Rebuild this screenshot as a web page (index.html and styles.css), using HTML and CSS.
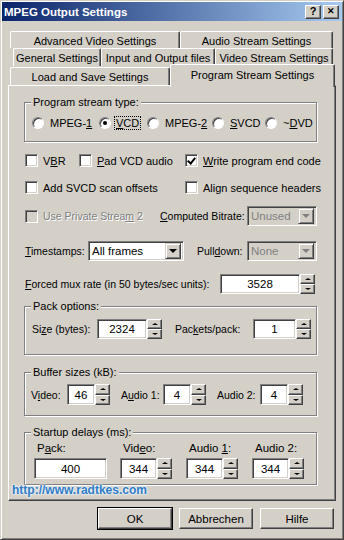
FILE: index.html
```html
<!DOCTYPE html>
<html lang="en">
<head>
  <meta charset="UTF-8">
  <meta name="viewport" content="width=device-width, initial-scale=1.0">
  <title>MPEG Output Settings</title>
  <link rel="stylesheet" href="styles.css">
</head>
<body>

  <div class="window">
    <div class="titlebar">
      <span class="title">MPEG Output Settings</span>
      <div class="caption-buttons">
        <span class="cap-btn">?</span>
        <span class="cap-btn cap-close">&#x2715;</span>
      </div>
    </div>

    <!-- tab strip, three rows -->
    <div class="tabs">
      <div class="tab-row row-1">
        <div class="tab" style="width: 170px">Advanced Video Settings</div>
        <div class="tab" style="width: 153px">Audio Stream Settings</div>
      </div>
      <div class="tab-row row-2">
        <div class="tab" style="width: 88px">General Settings</div>
        <div class="tab" style="width: 114px">Input and Output files</div>
        <div class="tab" style="width: 118px">Video Stream Settings</div>
      </div>
      <div class="tab-row row-3">
        <div class="tab" style="width: 160px">Load and Save Settings</div>
        <div class="tab tab-active" style="width: 165px">Program Stream Settings</div>
      </div>
    </div>

    <div class="panel">
      <div class="group group-type">
        <span class="group-title">Program stream type:</span>
        <div class="radio-row">
          <label class="radio-item"><span class="radio"></span><span>MPEG-<u>1</u></span></label>
          <label class="radio-item"><span class="radio checked"></span><span class="focus"><u>V</u>CD</span></label>
          <label class="radio-item"><span class="radio"></span><span>MPEG-<u>2</u></span></label>
          <label class="radio-item"><span class="radio"></span><span><u>S</u>VCD</span></label>
          <label class="radio-item"><span class="radio"></span><span>~<u>D</u>VD</span></label>
        </div>
      </div>

      <div class="row row-check">
        <label class="check-item" style="width: 54px"><span class="check"></span><span>V<u>B</u>R</span></label>
        <label class="check-item" style="width: 106px"><span class="check"></span><span><u>P</u>ad VCD audio</span></label>
        <label class="check-item"><span class="check checked"></span><span><u>W</u>rite program end code</span></label>
      </div>

      <div class="row row-check2">
        <label class="check-item" style="width: 160px"><span class="check"></span><span>Add SVCD scan offsets</span></label>
        <label class="check-item"><span class="check"></span><span>Align sequence headers</span></label>
      </div>

      <div class="row row-field">
        <label class="check-item disabled" style="width: 135px"><span class="check"></span><span>Use Private Strea<u>m</u> 2</span></label>
        <span class="label" style="width: 87px"><u>C</u>omputed Bitrate:</span>
        <div class="combo disabled" style="width: 70px">
          <span class="combo-text">Unused</span>
          <span class="combo-btn"><span class="arrow-down"></span></span>
        </div>
      </div>

      <div class="row row-field row-stamps">
        <span class="label" style="width: 63px"><u>T</u>imestamps:</span>
        <div class="combo" style="width: 96px">
          <span class="combo-text">All frames</span>
          <span class="combo-btn"><span class="arrow-down"></span></span>
        </div>
        <span class="label label-gap" style="width: 63px">Pull<u>d</u>own:</span>
        <div class="combo disabled" style="width: 70px">
          <span class="combo-text">None</span>
          <span class="combo-btn"><span class="arrow-down"></span></span>
        </div>
      </div>

      <div class="row row-field row-mux">
        <span class="label" style="width: 195px"><u>F</u>orced mux rate (in 50 bytes/sec units):</span>
        <span class="field" style="width: 80px">3528</span>
        <span class="spin"><span class="spin-btn"><span class="arrow-up"></span></span><span class="spin-btn"><span class="arrow-down"></span></span></span>
      </div>

      <div class="group group-pack">
        <span class="group-title">Pack options:</span>
        <div class="row row-field">
          <span class="label" style="width: 65px">Si<u>z</u>e (bytes):</span>
          <span class="field" style="width: 50px">2324</span>
          <span class="spin"><span class="spin-btn"><span class="arrow-up"></span></span><span class="spin-btn"><span class="arrow-down"></span></span></span>
          <span class="label label-gap" style="width: 91px">Pac<u>k</u>ets/pack:</span>
          <span class="field" style="width: 43px">1</span>
          <span class="spin"><span class="spin-btn"><span class="arrow-up"></span></span><span class="spin-btn"><span class="arrow-down"></span></span></span>
        </div>
      </div>

      <div class="group group-buffer">
        <span class="group-title">Buffer sizes (kB):</span>
        <div class="row row-field">
          <span class="label" style="width: 36px">V<u>i</u>deo:</span>
          <span class="field" style="width: 28px">46</span>
          <span class="spin"><span class="spin-btn"><span class="arrow-up"></span></span><span class="spin-btn"><span class="arrow-down"></span></span></span>
          <span class="label label-gap-sm" style="width: 53px">A<u>u</u>dio 1:</span>
          <span class="field" style="width: 28px">4</span>
          <span class="spin"><span class="spin-btn"><span class="arrow-up"></span></span><span class="spin-btn"><span class="arrow-down"></span></span></span>
          <span class="label label-gap-sm" style="width: 54px">Audio 2:</span>
          <span class="field" style="width: 28px">4</span>
          <span class="spin"><span class="spin-btn"><span class="arrow-up"></span></span><span class="spin-btn"><span class="arrow-down"></span></span></span>
        </div>
      </div>

      <div class="group group-delay">
        <span class="group-title">Startup delays (ms):</span>
        <div class="delay-grid">
          <div class="delay-col" style="width: 86px">
            <span class="delay-label">P<u>a</u>ck:</span>
            <span class="field" style="width: 73px">400</span>
          </div>
          <div class="delay-col" style="width: 66px">
            <span class="delay-label">Vid<u>e</u>o:</span>
            <div class="delay-input">
              <span class="field" style="width: 37px">344</span>
              <span class="spin"><span class="spin-btn"><span class="arrow-up"></span></span><span class="spin-btn"><span class="arrow-down"></span></span></span>
            </div>
          </div>
          <div class="delay-col" style="width: 66px">
            <span class="delay-label">Audio <u>1</u>:</span>
            <div class="delay-input">
              <span class="field" style="width: 37px">344</span>
              <span class="spin"><span class="spin-btn"><span class="arrow-up"></span></span><span class="spin-btn"><span class="arrow-down"></span></span></span>
            </div>
          </div>
          <div class="delay-col">
            <span class="delay-label">Audio 2:</span>
            <div class="delay-input">
              <span class="field" style="width: 37px">344</span>
              <span class="spin"><span class="spin-btn"><span class="arrow-up"></span></span><span class="spin-btn"><span class="arrow-down"></span></span></span>
            </div>
          </div>
        </div>
      </div>
    </div>

    <div class="buttons">
      <span class="button button-default">OK</span>
      <span class="button">Abbrechen</span>
      <span class="button">Hilfe</span>
    </div>

    <span class="watermark">http://www.radtkes.com</span>
  </div>

</body>
</html>
```

FILE: styles.css
```css
body {
  margin: 0;
  background-color: #d4d0c8;
  font-family: "Liberation Sans", Arial, sans-serif;
  font-size: 10.5px;
  color: #000;
}

u {
  text-underline-offset: 1px;
}

.window {
  position: relative;
  width: 344px;
  height: 540px;
  box-sizing: border-box;
  padding: 1px;
  border: 1px solid;
  border-color: #d4d0c8 #404040 #404040 #d4d0c8;
  box-shadow: inset 1px 1px 0 #fff, inset -1px -1px 0 #808080;
}

/* title bar */
.titlebar {
  height: 19px;
  display: flex;
  align-items: center;
  justify-content: space-between;
  padding: 0 3px 0 2px;
  background: linear-gradient(to right, #0a246a, #a6caf0);
}

.title {
  color: #fff;
  font-weight: bold;
  font-size: 11.5px;
}

.caption-buttons {
  display: flex;
  gap: 2px;
}

.cap-btn {
  width: 16px;
  height: 14px;
  box-sizing: border-box;
  display: flex;
  align-items: center;
  justify-content: center;
  background-color: #d4d0c8;
  border: 1px solid;
  border-color: #fff #404040 #404040 #fff;
  box-shadow: inset -1px -1px 0 #808080;
  font-weight: bold;
  font-size: 11px;
  line-height: 1;
}

.cap-close {
  font-size: 9px;
}

/* tabs */
.tabs {
  margin-top: 10px;
  font-size: 11px;
}

.tab-row {
  display: flex;
}

.row-1 {
  margin-left: 8px;
  height: 17px;
}

.row-2 {
  margin-left: 11px;
  height: 18px;
}

.row-3 {
  margin-left: 8px;
  height: 19px;
  align-items: flex-end;
}

.tab {
  box-sizing: border-box;
  height: 100%;
  display: flex;
  align-items: center;
  justify-content: center;
  border: 1px solid;
  border-bottom: none;
  border-color: #fff #404040 #404040 #fff;
  border-radius: 2px 2px 0 0;
  box-shadow: inset -1px 0 0 #808080;
  padding-top: 1px;
  white-space: nowrap;
}

.row-3 .tab {
  height: 18px;
}

.row-3 .tab-active {
  position: relative;
  z-index: 1;
  height: 23px;
  margin-bottom: -2px;
  padding-bottom: 4px;
  background-color: #d4d0c8;
}

/* page panel */
.panel {
  margin-left: 6px;
  width: 328px;
  height: 416px;
  box-sizing: border-box;
  padding-left: 15px;
  border: 1px solid;
  border-color: #fff #404040 #404040 #fff;
  box-shadow: inset -1px -1px 0 #808080;
  display: flex;
  flex-direction: column;
}

.group {
  position: relative;
  width: 293px;
  box-sizing: border-box;
  border: 1px solid #808080;
  box-shadow: inset 1px 1px 0 #fff, 1px 1px 0 #fff;
}

.group-title {
  position: absolute;
  top: -7px;
  left: 6px;
  padding: 0 2px;
  line-height: 13px;
  font-size: 11px;
  background-color: #d4d0c8;
}

.group-type {
  margin-top: 16px;
  height: 40px;
  padding: 2px 0 0 7px;
  display: flex;
  align-items: center;
}

.radio-row {
  display: grid;
  grid-template-columns: 67px 48px 65px 53px auto;
  font-size: 11px;
}

.radio-item {
  display: flex;
  align-items: center;
  gap: 6px;
}

.radio {
  width: 12px;
  height: 12px;
  box-sizing: border-box;
  border-radius: 50%;
  border: 1px solid;
  border-color: #808080 #fff #fff #808080;
  box-shadow: inset 1px 1px 0 #404040;
  background-color: #fff;
  display: flex;
  align-items: center;
  justify-content: center;
}

.radio.checked::after {
  content: "";
  width: 4px;
  height: 4px;
  border-radius: 50%;
  background-color: #000;
}

.focus {
  outline: 1px dotted #000;
  outline-offset: 0;
  padding: 0 1px;
  margin-left: -2px;
}

/* plain rows */
.row {
  display: flex;
  align-items: center;
  white-space: nowrap;
}

.row-check {
  margin: 12px 0 0 1px;
  height: 13px;
  font-size: 11px;
}

.row-check2 {
  margin: 14px 0 0 1px;
  height: 13px;
  font-size: 11px;
}

.row-field {
  height: 20px;
  margin: 12px 0 0 1px;
}

.row-stamps {
  margin-top: 15px;
}

.row-mux {
  margin-top: 13px;
}

.check-item {
  display: flex;
  align-items: center;
  gap: 5px;
}

.check {
  width: 13px;
  height: 13px;
  box-sizing: border-box;
  border: 1px solid;
  border-color: #808080 #fff #fff #808080;
  box-shadow: inset 1px 1px 0 #404040, inset -1px -1px 0 #d4d0c8;
  background-color: #fff;
  position: relative;
}

.check.checked::after {
  content: "";
  position: absolute;
  left: 3px;
  top: 1px;
  width: 3px;
  height: 6px;
  border: solid #000;
  border-width: 0 2px 2px 0;
  transform: rotate(40deg);
}

.disabled {
  color: #808080;
  text-shadow: 1px 1px 0 #fff;
}

.check-item.disabled .check {
  background-color: #d4d0c8;
}

.label {
  box-sizing: border-box;
}

.label-gap {
  padding-left: 13px;
}

.label-gap-sm {
  padding-left: 11px;
}

/* inputs */
.field,
.combo {
  height: 20px;
  box-sizing: border-box;
  border: 1px solid;
  border-color: #808080 #fff #fff #808080;
  box-shadow: inset 1px 1px 0 #404040, inset -1px -1px 0 #d4d0c8;
  background-color: #fff;
}

.field {
  display: flex;
  align-items: center;
  justify-content: center;
  font-size: 11.5px;
}

.combo {
  display: flex;
  align-items: center;
  justify-content: space-between;
  padding: 2px;
}

.combo-text {
  padding-left: 1px;
  font-size: 11.5px;
}

.combo.disabled {
  background-color: #d4d0c8;
  text-shadow: none;
}

.combo-btn {
  width: 16px;
  height: 16px;
  box-sizing: border-box;
  display: flex;
  align-items: center;
  justify-content: center;
  background-color: #d4d0c8;
  border: 1px solid;
  border-color: #d4d0c8 #404040 #404040 #d4d0c8;
  box-shadow: inset 1px 1px 0 #fff, inset -1px -1px 0 #808080;
}

.arrow-down,
.arrow-up {
  width: 0;
  height: 0;
  border-left: 4px solid transparent;
  border-right: 4px solid transparent;
}

.arrow-down {
  border-top: 4px solid #000;
}

.arrow-up {
  border-bottom: 4px solid #000;
}

.combo.disabled .arrow-down {
  border-top-color: #808080;
}

.spin {
  width: 15px;
  height: 20px;
  display: flex;
  flex-direction: column;
}

.spin-btn {
  flex: 1;
  box-sizing: border-box;
  display: flex;
  align-items: center;
  justify-content: center;
  background-color: #d4d0c8;
  border: 1px solid;
  border-color: #fff #404040 #404040 #fff;
  box-shadow: inset -1px -1px 0 #808080;
}

.spin .arrow-down,
.spin .arrow-up {
  border-left-width: 3px;
  border-right-width: 3px;
}

.spin .arrow-down {
  border-top-width: 2px;
}

.spin .arrow-up {
  border-bottom-width: 2px;
}

/* option groups */
.group-pack {
  margin-top: 12px;
  height: 49px;
  padding-left: 7px;
}

.group-pack .row-field {
  margin: 12px 0 0 0;
}

.group-buffer {
  margin-top: 17px;
  height: 44px;
  padding-left: 6px;
}

.group-buffer .row-field {
  margin: 11px 0 0 0;
  height: 21px;
}

.group-buffer .field,
.group-buffer .spin {
  height: 21px;
}

.group-delay {
  margin-top: 16px;
  height: 53px;
  padding: 9px 0 0 9px;
}

.delay-grid {
  display: flex;
}

.delay-col {
  display: flex;
  flex-direction: column;
  gap: 3px;
}

.delay-label {
  padding-left: 3px;
  line-height: 13px;
  font-size: 11.5px;
}

.delay-input {
  display: flex;
}

.group-delay .field,
.group-delay .spin {
  height: 21px;
}

/* dialog buttons */
.buttons {
  display: flex;
  gap: 7px;
  margin: 7px 0 0 96px;
}

.button {
  width: 74px;
  height: 21px;
  box-sizing: border-box;
  display: flex;
  align-items: center;
  justify-content: center;
  border: 1px solid;
  border-color: #fff #404040 #404040 #fff;
  box-shadow: inset -1px -1px 0 #808080;
  font-size: 11.5px;
}

.button-default {
  outline: 1px solid #000;
}

.watermark {
  position: absolute;
  left: 11px;
  top: 482px;
  font-weight: bold;
  font-size: 12px;
  color: #2f7cc4;
  text-shadow: 0 0 2px #eef4fa, 0 0 2px #eef4fa, 0 0 3px #eef4fa;
}
```
